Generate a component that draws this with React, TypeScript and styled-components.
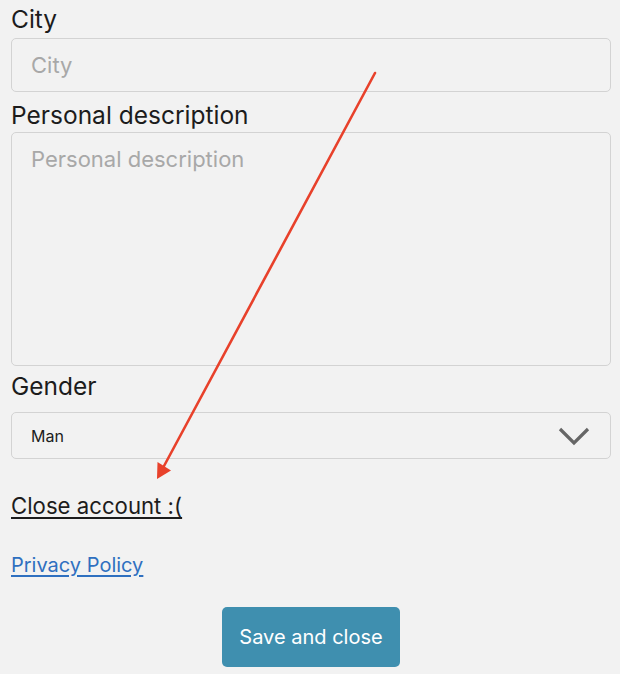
import React from "react";
import styled, { createGlobalStyle } from "styled-components";

const Global = createGlobalStyle`
  html, body { margin: 0; padding: 0; background: #f2f2f2; }
  body { font-family: Inter, "Noto Sans", sans-serif; color: #1c1c1c; }
  * { box-sizing: border-box; }
`;

const Page = styled.div`
  position: relative;
  width: 620px;
  height: 674px;
  overflow: hidden;
  padding: 4px 9px 0 11px;
  display: flex;
  flex-direction: column;
`;

const Label = styled.label<{ $gap: number }>`
  display: block;
  font-size: 24.5px;
  line-height: 30px;
  color: #1c1c1c;
  margin-top: ${(p) => p.$gap}px;
`;

const fieldBase = `
  display: block;
  width: 600px;
  border: 1px solid #d3d3d3;
  border-radius: 5px;
  background: #f2f2f2;
  font-family: Inter, "Noto Sans", sans-serif;
  outline: none;
`;

const TextInput = styled.input`
  ${fieldBase}
  margin-top: 4px;
  height: 54px;
  padding: 0 19px;
  font-size: 22px;
  color: #1c1c1c;
  &::placeholder { color: #a8a8a8; }
`;

const TextArea = styled.textarea`
  ${fieldBase}
  margin-top: 2px;
  height: 234px;
  padding: 12px 19px;
  font-size: 22px;
  line-height: 28px;
  resize: none;
  color: #1c1c1c;
  &::placeholder { color: #a8a8a8; }
`;

const SelectBox = styled.div`
  ${fieldBase}
  margin-top: 11px;
  height: 47px;
  padding: 0 20px 0 19px;
  display: flex;
  align-items: center;
  justify-content: space-between;
  font-size: 16px;
  color: #1c1c1c;
`;

const Chevron = styled.svg`
  width: 32px;
  height: 20px;
  flex: none;
`;

const CloseLink = styled.a`
  display: block;
  width: max-content;
  margin-top: 33px;
  font-size: 22.2px;
  line-height: 28px;
  color: #1c1c1c;
  text-decoration: underline;
  text-underline-offset: 3px;
  text-decoration-thickness: 1.5px;
`;

const PolicyLink = styled.a`
  display: block;
  width: max-content;
  margin-top: 32px;
  font-size: 20px;
  line-height: 26px;
  color: #2f70c0;
  text-decoration: underline;
  text-underline-offset: 3px;
`;

const SaveButton = styled.button`
  align-self: center;
  margin-top: 29px;
  width: 178px;
  height: 60px;
  border: none;
  border-radius: 5px;
  background: #3f8faf;
  color: #ffffff;
  font-family: Inter, "Noto Sans", sans-serif;
  font-size: 20px;
`;

const Overlay = styled.svg`
  position: absolute;
  left: 0;
  top: 0;
  width: 620px;
  height: 674px;
  pointer-events: none;
`;

export default function App() {
  return (
    <>
      <Global />
      <Page>
        <Label $gap={0}>City</Label>
        <TextInput placeholder="City" />
        <Label $gap={8}>Personal description</Label>
        <TextArea placeholder="Personal description" />
        <Label $gap={5}>Gender</Label>
        <SelectBox>
          <span>Man</span>
          <Chevron viewBox="0 0 32 20">
            <polyline points="2,3 16,17 30,3" fill="none" stroke="#666" strokeWidth="3.2" />
          </Chevron>
        </SelectBox>
        <CloseLink>Close account :(</CloseLink>
        <PolicyLink href="#">Privacy Policy</PolicyLink>
        <SaveButton>Save and close</SaveButton>
        <Overlay viewBox="0 0 620 674">
          <line x1="375" y1="73" x2="164" y2="466" stroke="#e8412b" strokeWidth="2.6" strokeLinecap="round" />
          <polygon points="157,479 157.5,462 171,470.5" fill="#e8412b" />
        </Overlay>
      </Page>
    </>
  );
}
